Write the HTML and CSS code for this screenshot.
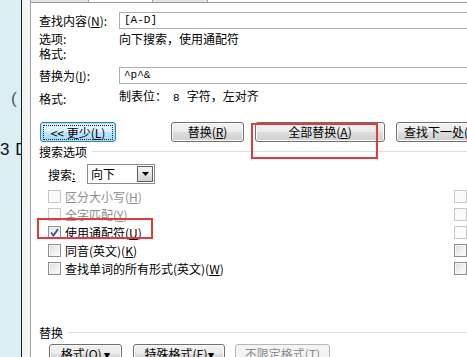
FILE: index.html
```html
<!DOCTYPE html>
<html lang="zh-CN">
<head>
<meta charset="utf-8">
<title>查找和替换</title>
<link rel="stylesheet" href="styles.css">
</head>
<body>
<div class="page">
  <div class="doc">
    <div class="doc-paren">(</div>
    <div class="doc-num">3 D</div>
  </div>
  <div class="edge"></div>
  <div class="dialog">
    <div class="tabs">
      <div class="tab tab-a"></div>
      <div class="tab tab-b"></div>
      <div class="tab tab-c"></div>
    </div>
    <div class="content">
      <div class="frow frow-find">
        <div class="flabel">查找内容(<u>N</u>):</div>
        <div class="input">[A-D]</div>
      </div>
      <div class="frow frow-info">
        <div class="flabel">选项:</div>
        <div class="fvalue">向下搜索，使用通配符</div>
      </div>
      <div class="frow">
        <div class="flabel">格式:</div>
        <div class="fvalue"></div>
      </div>
      <div class="frow frow-repl">
        <div class="flabel">替换为(<u>I</u>):</div>
        <div class="input">^p^&amp;</div>
      </div>
      <div class="frow frow-fmt">
        <div class="flabel flabel-low">格式:</div>
        <div class="fvalue">制表位：<span class="num8">8</span>字符，左对齐</div>
      </div>

      <div class="btnrow">
        <div class="btn btn-focus btn-less"><span class="focusring">&lt;&lt; 更少(<u>L</u>)</span></div>
        <div class="btn btn-repl">替换(<u>R</u>)</div>
        <div class="btn btn-all">全部替换(<u>A</u>)</div>
        <div class="btn btn-next">查找下一处(<u>F</u>)</div>
      </div>

      <div class="section">
        <div class="section-label">搜索选项</div>
        <div class="section-line"></div>
      </div>

      <div class="searchrow">
        <div class="search-label">搜索<u>:</u></div>
        <div class="select">
          <span class="select-text">向下</span>
          <span class="select-arrow"><svg width="7" height="4" viewBox="0 0 7 4"><path d="M0 0H7L3.5 4Z" fill="#000"/></svg></span>
        </div>
      </div>

      <div class="options">
        <div class="opt">
          <div class="opt-main"><span class="cb cb-dis"></span><span class="opt-text dis">区分大小写(<u>H</u>)</span></div>
          <span class="cb cb-dis"></span>
        </div>
        <div class="opt">
          <div class="opt-main"><span class="cb cb-dis"></span><span class="opt-text dis">全字匹配(<u>Y</u>)</span></div>
          <span class="cb cb-dis"></span>
        </div>
        <div class="opt">
          <div class="opt-main"><span class="cb cb-on"><svg width="9" height="9" viewBox="0 0 9 9"><path d="M1 4.5L3.5 7.5L8 1" fill="none" stroke="#3d4f8f" stroke-width="1.8"/></svg></span><span class="opt-text">使用通配符(<u>U</u>)</span></div>
          <span class="cb cb-dis"></span>
        </div>
        <div class="opt">
          <div class="opt-main"><span class="cb"></span><span class="opt-text">同音(英文)(<u>K</u>)</span></div>
          <span class="cb"></span>
        </div>
        <div class="opt">
          <div class="opt-main"><span class="cb"></span><span class="opt-text">查找单词的所有形式(英文)(<u>W</u>)</span></div>
          <span class="cb"></span>
        </div>
      </div>

      <div class="section section-repl">
        <div class="section-label">替换</div>
        <div class="section-line"></div>
      </div>

      <div class="btnrow2">
        <div class="btn btn-fmt">格式(<u>O</u>) ▾</div>
        <div class="btn btn-spec">特殊格式(<u>E</u>)▾</div>
        <div class="btn btn-dis btn-nofmt">不限定格式(<u>T</u>)</div>
      </div>
    </div>
    <div class="mark mark-all"></div>
    <div class="mark mark-wild"></div>
  </div>
</div>
</body>
</html>
```
FILE: styles.css
```css
* { box-sizing: border-box; }
html, body { margin: 0; padding: 0; }
body {
  width: 467px;
  height: 357px;
  overflow: hidden;
  background: #fff;
  font-family: "Noto Sans CJK SC", "Liberation Sans", sans-serif;
  font-size: 12px;
  color: #000;
}
u { text-decoration: underline; text-underline-offset: 1px; }

.page { display: flex; height: 357px; }

.doc {
  width: 21px;
  flex: none;
  background: #dbeef3;
  overflow: hidden;
  display: flex;
  flex-direction: column;
}
.doc-paren {
  margin-top: 89px;
  margin-left: 11px;
  font-family: "Liberation Sans", sans-serif;
  font-size: 17px;
  line-height: 20px;
  color: #555;
}
.doc-num {
  margin-top: 31px;
  font-family: "Liberation Sans", sans-serif;
  font-size: 17px;
  line-height: 20px;
  white-space: nowrap;
  word-spacing: 1px;
  color: #111;
}

.edge {
  width: 10px;
  flex: none;
  border-left: 1px solid #1e1e1e;
  border-right: 1px solid #a3a3a3;
  background: #f4f4f4;
}

.dialog {
  flex: 1;
  min-width: 0;
  position: relative;
  background: #fff;
  overflow: hidden;
}

.tabs { display: flex; height: 3px; border-bottom: 1px solid #9a9a9a; }
.tab { height: 2px; border-right: 1px solid #a0a0a0; }
.tab-a { width: 58px; background: #e4e4e4; }
.tab-b { width: 64px; background: #fff; }
.tab-c { width: 55px; background: #e4e4e4; }

.content { padding-left: 8px; }

.frow { display: flex; align-items: center; }
.frow-find { margin-top: 9px; }
.frow-info { margin-top: 2px; }
.frow-repl { margin-top: 6px; }
.frow-fmt { margin-top: 4px; align-items: flex-start; }
.flabel { width: 80px; flex: none; line-height: 15px; white-space: nowrap; }
.flabel-low { padding-top: 3px; }
.fvalue { line-height: 15px; height: 15px; white-space: nowrap; }
.num8 {
  font-family: "Liberation Mono", monospace;
  font-size: 11px;
  margin: 0 7px 0 6px;
}
.input {
  flex: 1;
  height: 17px;
  margin-right: -4px;
  border: 1px solid #a9afb7;
  padding-left: 4px;
  font-family: "Liberation Mono", monospace;
  font-size: 11px;
  line-height: 15px;
  white-space: nowrap;
}

.btn {
  flex: none;
  height: 20px;
  border: 1px solid #707070;
  border-radius: 3px;
  background: linear-gradient(#f2f2f2 0%, #ebebeb 48%, #dddddd 52%, #cfcfcf 100%);
  box-shadow: inset 0 0 0 1px #fbfbfb;
  display: flex;
  align-items: center;
  justify-content: center;
  line-height: 16px;
  white-space: nowrap;
}
.btnrow { display: flex; margin-top: 16px; margin-left: 1px; margin-right: -40px; }
.btn-less { width: 76px; }
.btn-repl { width: 73px; margin-left: 55px; }
.btn-all { width: 130px; margin-left: 11px; }
.btn-next { width: 96px; margin-left: 11px; justify-content: flex-start; padding-left: 7px; }
.btn-focus {
  border-color: #3c7fb1;
  background: linear-gradient(#eaf6fd 0%, #d9f0fc 48%, #bee6fd 52%, #a7d9f5 100%);
  box-shadow: inset 0 0 0 1px #9fe1fb;
}
.focusring {
  outline: 1px dotted #222;
  outline-offset: 0;
  padding: 0 3px;
  line-height: 13px;
  width: 68px;
  text-align: center;
}

.section { display: flex; align-items: center; margin-top: 2px; }
.section-label { line-height: 15px; }
.section-line { flex: 1; border-top: 1px solid #d8dfe3; margin-left: 5px; }
.section-repl { margin-top: 48px; }
.section-repl .section-line { margin-top: -1px; }

.searchrow { display: flex; align-items: center; margin-top: 5px; padding-left: 9px; }
.search-label { width: 39px; flex: none; line-height: 15px; }
.select {
  width: 68px;
  height: 20px;
  border: 1px solid #8a8a8a;
  display: flex;
  align-items: stretch;
  justify-content: space-between;
  padding: 1px;
}
.select-text { padding-left: 2px; line-height: 16px; }
.select-arrow {
  width: 16px;
  border: 1px solid #5e5e5e;
  background: linear-gradient(#f4f4f4, #d4d4d4);
  display: flex;
  align-items: center;
  justify-content: center;
}

.options { margin-top: 3px; }
.opt {
  display: flex;
  align-items: center;
  justify-content: space-between;
  height: 18px;
  padding-left: 9px;
}
.opt-main { display: flex; align-items: center; }
.cb {
  width: 13px;
  height: 13px;
  flex: none;
  border: 1px solid #8f8f8f;
  background: linear-gradient(135deg, #dcdcdc 0%, #f2f2f2 60%, #ffffff 100%);
  box-shadow: inset 0 0 0 1px #f4f4f4;
  display: flex;
  align-items: center;
  justify-content: center;
}
.cb-dis {
  border-color: #c8c8c8;
  background: #fafafa;
  box-shadow: none;
}
.cb-on { background: linear-gradient(135deg, #e4e4e4 0%, #ffffff 100%); }
.opt-text { margin-left: 4px; line-height: 15px; white-space: nowrap; }
.dis { color: #8e8e8e; }

.btnrow2 { display: flex; margin-top: 4px; margin-left: 10px; }
.btn-fmt { width: 73px; }
.btn-spec { width: 92px; margin-left: 11px; }
.btn-nofmt { width: 95px; margin-left: 10px; }
.btn-dis {
  border-color: #b4b8bb;
  background: #f4f4f4;
  box-shadow: none;
  color: #8a8a8a;
}

.mark { position: absolute; border: 2px solid #e4393e; }
.mark-all { left: 220px; top: 123px; width: 127px; height: 36px; }
.mark-wild { left: 6px; top: 218px; width: 116px; height: 21px; }
```
